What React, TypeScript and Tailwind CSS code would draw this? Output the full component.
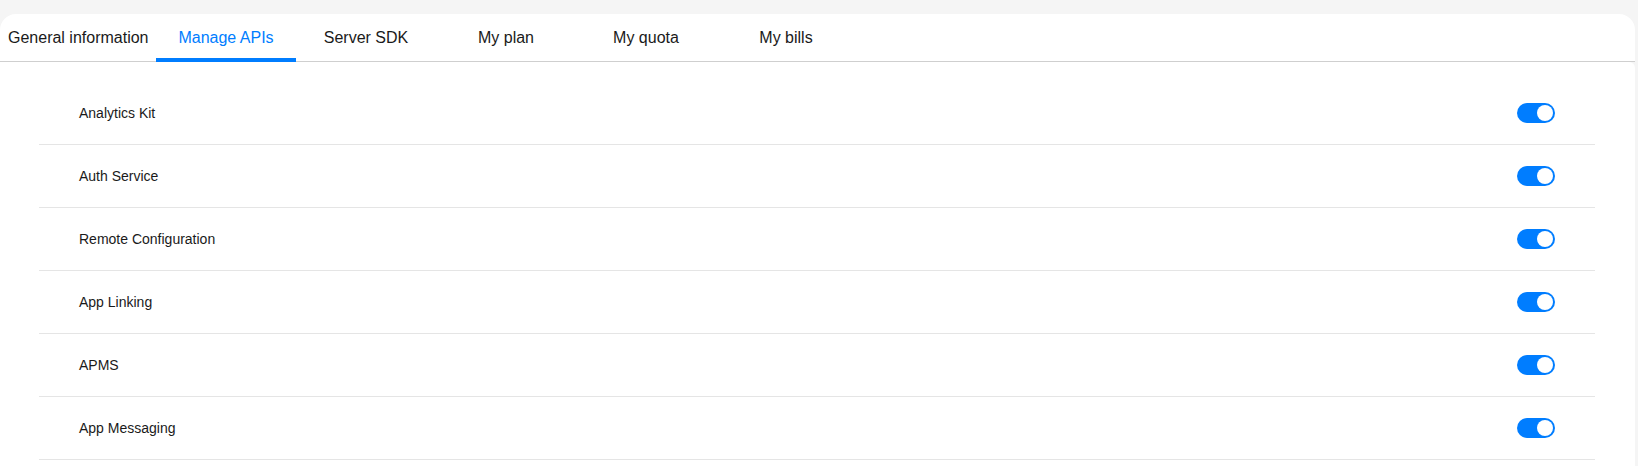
import { useState } from 'react';

const TABS = ['General information', 'Manage APIs', 'Server SDK', 'My plan', 'My quota', 'My bills'];

const APIS = ['Analytics Kit', 'Auth Service', 'Remote Configuration', 'App Linking', 'APMS', 'App Messaging'];

function Toggle({ on, onChange }: { on: boolean; onChange: () => void }) {
  return (
    <button
      type="button"
      onClick={onChange}
      className={`flex h-5 w-[38px] items-center rounded-full p-[2px] ${on ? 'justify-end bg-[#007dff]' : 'justify-start bg-[#cfcfcf]'}`}
    >
      <span className="h-4 w-4 rounded-full bg-white" />
    </button>
  );
}

export default function App() {
  const [active, setActive] = useState(1);
  const [enabled, setEnabled] = useState<boolean[]>(APIS.map(() => true));

  return (
    <div className="h-[466px] w-full overflow-hidden bg-[#f5f5f5] pr-[3px] pt-[14px] font-['Liberation_Sans',Arial,sans-serif]">
      <div className="rounded-t-2xl border-b border-[#cfcfcf] bg-white">
        <div className="flex h-[47px]">
          {TABS.map((tab, i) => (
            <button
              key={tab}
              type="button"
              onClick={() => setActive(i)}
              className={`relative flex h-full items-center whitespace-nowrap text-base ${i === 0 ? 'w-[156px] justify-start pl-2' : 'w-[140px] justify-center'} ${active === i ? 'text-[#007dff]' : 'text-[#1a1a1a]'}`}
            >
              {tab}
              {active === i ? <span className="absolute bottom-[-1px] left-0 right-0 h-1 bg-[#007dff]" /> : null}
            </button>
          ))}
        </div>
      </div>
      <div className="h-full rounded-tr-md bg-white pl-[39px] pr-[40px] pt-[20px]">
        {APIS.map((name, i) => (
          <div key={name} className="flex h-[63px] items-center justify-between border-b border-[#e5e5e5] pl-10 pr-10">
            <span className="text-sm text-[#1a1a1a]">{name}</span>
            <Toggle on={enabled[i]} onChange={() => setEnabled((prev) => prev.map((v, j) => (j === i ? !v : v)))} />
          </div>
        ))}
      </div>
    </div>
  );
}
